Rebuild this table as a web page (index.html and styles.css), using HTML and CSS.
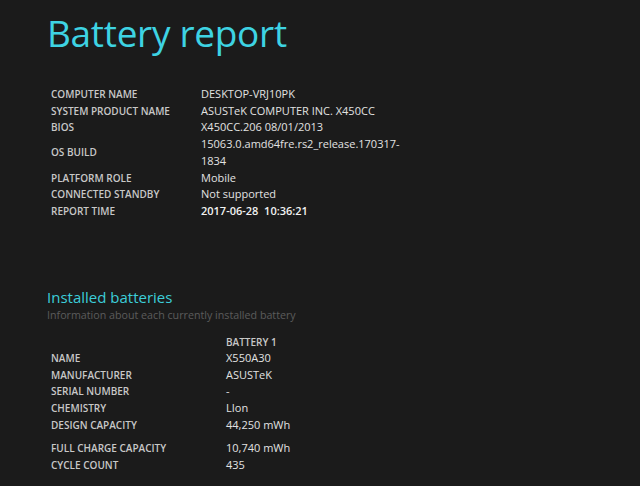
FILE: index.html
```html
<!DOCTYPE html>
<html>
<head>
<meta charset="utf-8">
<link rel="stylesheet" href="styles.css">
</head>
<body>
<h1 class="title">Battery report</h1>
<table class="info">
  <tr><td class="label">COMPUTER NAME</td><td class="value">DESKTOP-VRJ10PK</td></tr>
  <tr><td class="label">SYSTEM PRODUCT NAME</td><td class="value">ASUSTeK COMPUTER INC. X450CC</td></tr>
  <tr><td class="label">BIOS</td><td class="value">X450CC.206 08/01/2013</td></tr>
  <tr><td class="label">OS BUILD</td><td class="value wrap">15063.0.amd64fre.rs2_release.170317-<wbr>1834</td></tr>
  <tr><td class="label">PLATFORM ROLE</td><td class="value">Mobile</td></tr>
  <tr><td class="label">CONNECTED STANDBY</td><td class="value">Not supported</td></tr>
  <tr><td class="label">REPORT TIME</td><td class="value strong">2017-06-28&nbsp; 10:36:21</td></tr>
</table>

<h2 class="section">Installed batteries</h2>
<div class="subtitle">Information about each currently installed battery</div>
<table class="batteries">
  <tr><td class="label"></td><td class="colhead">BATTERY 1</td></tr>
  <tr><td class="label">NAME</td><td class="value">X550A30</td></tr>
  <tr><td class="label">MANUFACTURER</td><td class="value">ASUSTeK</td></tr>
  <tr><td class="label">SERIAL NUMBER</td><td class="value">-</td></tr>
  <tr><td class="label">CHEMISTRY</td><td class="value">LIon</td></tr>
  <tr><td class="label">DESIGN CAPACITY</td><td class="value">44,250 mWh</td></tr>
  <tr class="gap"><td class="label">FULL CHARGE CAPACITY</td><td class="value">10,740 mWh</td></tr>
  <tr><td class="label">CYCLE COUNT</td><td class="value">435</td></tr>
</table>
</body>
</html>
```
FILE: styles.css
```css
html, body {
  margin: 0;
  padding: 0;
  background: #1b1b1b;
  color: #e0e0e0;
  font-family: "Open Sans", "Noto Sans", sans-serif;
  overflow: hidden;
}
body {
  padding: 0 0 0 47px;
  height: 486px;
}
.title {
  margin: 0;
  padding-top: 3px;
  font-size: 37px;
  font-weight: 400;
  color: #3ed3e3;
  line-height: 60px;
  letter-spacing: -0.3px;
}
table {
  border-collapse: collapse;
}
td {
  padding: 0;
  vertical-align: middle;
}
.info {
  margin-top: 23px;
}
.info .label {
  width: 150px;
}
.label {
  padding-left: 4px;
  font-size: 10px;
  font-weight: 600;
  color: #c8c8c8;
  line-height: 16.7px;
}
.value {
  font-size: 11px;
  color: #e2e2e2;
  line-height: 16.7px;
}
.wrap {
  width: 200px;
}
.strong {
  font-weight: 600;
  color: #f2f2f2;
}
.section {
  margin: 67px 0 0 0;
  font-size: 15px;
  font-weight: 400;
  color: #3ccdd9;
  line-height: 20px;
}
.subtitle {
  font-size: 10.7px;
  color: #5c5c5c;
  line-height: 17px;
}
.batteries {
  margin-top: 10px;
}
.batteries .label {
  width: 175px;
}
.colhead {
  font-size: 10px;
  font-weight: 600;
  color: #c8c8c8;
  line-height: 16.5px;
}
.batteries .label, .batteries .value {
  line-height: 16.6px;
}
.gap td {
  padding-top: 7px;
}
```
